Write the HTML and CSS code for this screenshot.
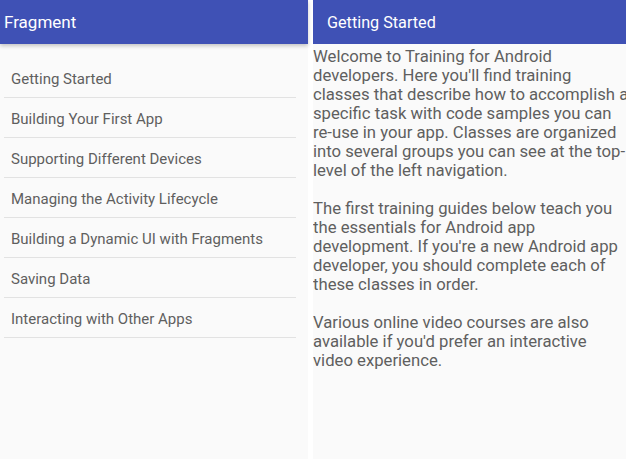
FILE: index.html
```html
<!DOCTYPE html>
<html>
<head>
<meta charset="utf-8">
<link rel="stylesheet" href="styles.css">
</head>
<body>
<div class="screen">
  <section class="pane pane-list">
    <header class="appbar appbar-left">Fragment</header>
    <ul class="menu">
      <li class="menu-item">Getting Started</li>
      <li class="menu-item">Building Your First App</li>
      <li class="menu-item">Supporting Different Devices</li>
      <li class="menu-item">Managing the Activity Lifecycle</li>
      <li class="menu-item">Building a Dynamic UI with Fragments</li>
      <li class="menu-item">Saving Data</li>
      <li class="menu-item">Interacting with Other Apps</li>
    </ul>
  </section>
  <section class="pane pane-detail">
    <header class="appbar appbar-right">Getting Started</header>
    <div class="article">
      <p class="para">Welcome to Training for Android developers. Here you'll find training classes that describe how to accomplish a specific task with code samples you can re-use in your app. Classes are organized into several groups you can see at the top-level of the left navigation.</p>
      <p class="para">The first training guides below teach you the essentials for Android app development. If you're a new Android app developer, you should complete each of these classes in order.</p>
      <p class="para">Various online video courses are also available if you'd prefer an interactive video experience.</p>
    </div>
  </section>
</div>
</body>
</html>
```
FILE: styles.css
```css
html, body {
  margin: 0;
  padding: 0;
  background: #ffffff;
}
.screen {
  display: flex;
  width: 626px;
  height: 459px;
  gap: 5px;
  overflow: hidden;
  font-family: Roboto, "Noto Sans", sans-serif;
}
.pane {
  background: #fafafa;
  height: 459px;
  display: flex;
  flex-direction: column;
}
.pane-list {
  width: 308px;
  flex: none;
}
.pane-detail {
  flex: 1;
  min-width: 0;
  overflow: hidden;
}
.appbar {
  height: 44px;
  flex: none;
  background: #3f51b5;
  color: #ffffff;
  display: flex;
  align-items: center;
  box-sizing: border-box;
}
.appbar-left {
  font-size: 17px;
  padding-left: 4px;
  box-shadow: 0 2px 4px rgba(0,0,0,0.22);
  position: relative;
  z-index: 1;
}
.appbar-right {
  font-size: 16.2px;
  padding-left: 14px;
}
.menu {
  list-style: none;
  margin: 14px 12px 0 4px;
  padding: 0;
}
.menu-item {
  height: 40px;
  box-sizing: border-box;
  border-bottom: 1px solid #e2e2e2;
  padding-left: 7px;
  padding-top: 3px;
  display: flex;
  align-items: center;
  font-size: 15px;
  color: #5f5f5f;
}
.article {
  width: 316px;
  padding-top: 3px;
}
.para {
  margin: 0 0 19px 0;
  font-size: 16.7px;
  line-height: 19px;
  color: #5f5f5f;
}
```
